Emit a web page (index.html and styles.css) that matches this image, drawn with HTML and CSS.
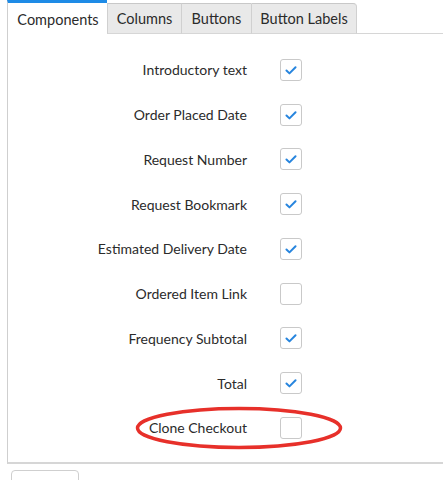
FILE: index.html
```html
<!DOCTYPE html>
<html>
<head>
<meta charset="utf-8">
<link rel="stylesheet" href="styles.css">
</head>
<body>
<div class="wrap">
  <div class="tabs">
    <div class="tab active">Components</div>
    <div class="tab">Columns</div>
    <div class="tab">Buttons</div>
    <div class="tab last">Button Labels</div>
    <div class="tab-fill"></div>
  </div>
  <div class="panel">
    <div class="row"><span class="label">Introductory text</span><span class="cb on"><svg viewBox="0 0 22 22"><path d="M6 11.5l3.3 3.2L16 8"/></svg></span></div>
    <div class="row"><span class="label">Order Placed Date</span><span class="cb on"><svg viewBox="0 0 22 22"><path d="M6 11.5l3.3 3.2L16 8"/></svg></span></div>
    <div class="row"><span class="label">Request Number</span><span class="cb on"><svg viewBox="0 0 22 22"><path d="M6 11.5l3.3 3.2L16 8"/></svg></span></div>
    <div class="row"><span class="label">Request Bookmark</span><span class="cb on"><svg viewBox="0 0 22 22"><path d="M6 11.5l3.3 3.2L16 8"/></svg></span></div>
    <div class="row"><span class="label">Estimated Delivery Date</span><span class="cb on"><svg viewBox="0 0 22 22"><path d="M6 11.5l3.3 3.2L16 8"/></svg></span></div>
    <div class="row"><span class="label">Ordered Item Link</span><span class="cb"></span></div>
    <div class="row"><span class="label">Frequency Subtotal</span><span class="cb on"><svg viewBox="0 0 22 22"><path d="M6 11.5l3.3 3.2L16 8"/></svg></span></div>
    <div class="row"><span class="label">Total</span><span class="cb on"><svg viewBox="0 0 22 22"><path d="M6 11.5l3.3 3.2L16 8"/></svg></span></div>
    <div class="row highlight"><span class="label">Clone Checkout</span><span class="cb"></span>
      <svg class="ring" viewBox="0 0 210 44"><ellipse cx="105" cy="22" rx="101.5" ry="19.5"/></svg>
    </div>
  </div>
  <div class="btn"></div>
</div>
</body>
</html>
```
FILE: styles.css
```css
html, body {
  margin: 0;
  padding: 0;
  background: #fff;
}
body {
  font-family: "Source Sans Pro", Lato, "Liberation Sans", sans-serif;
  color: #333;
  font-size: 14px;
  width: 443px;
  height: 480px;
  overflow: hidden;
}
.wrap {
  padding-left: 7px;
}
.tabs {
  display: flex;
  height: 34px;
}
.tab {
  box-sizing: border-box;
  height: 31px;
  margin-top: 3px;
  background: #e9e9e9;
  border-top: 1px solid #c8c8c8;
  border-left: 1px solid #d0d0d0;
  border-bottom: 1px solid #d6d6d6;
  display: flex;
  align-items: center;
  justify-content: center;
  font-size: 14.5px;
  color: #2b2b2b;
}
.tab.active {
  width: 100px;
  height: 34px;
  margin-top: 0;
  background: #fff;
  border-top: 3px solid #1e8be6;
  border-left: 1px solid #cfcfcf;
  border-bottom: none;
  padding-top: 2px;
  padding-left: 1px;
}
.tab:nth-child(2) { width: 74px; }
.tab:nth-child(3) { width: 70px; }
.tab.last {
  width: 106px;
  border-right: 1px solid #d0d0d0;
  border-top-right-radius: 4px;
}
.tab-fill {
  flex: 1;
  border-bottom: 1px solid #d6d6d6;
}
.panel {
  border-left: 1px solid #cfcfcf;
  border-bottom: 2px solid #d6d6d6;
  height: 430px;
  box-sizing: border-box;
  padding-top: 13.5px;
}
.row {
  display: grid;
  grid-template-columns: 239px 22px;
  column-gap: 33px;
  height: 44.75px;
  align-items: center;
  position: relative;
}
.label {
  text-align: right;
  font-size: 14px;
  color: #2b2b2b;
}
.cb {
  box-sizing: border-box;
  width: 22px;
  height: 22px;
  border: 1px solid #c9c9c9;
  border-radius: 3px;
  background: #fff;
  display: block;
}
.cb svg {
  display: block;
  width: 20px;
  height: 20px;
}
.cb svg path {
  fill: none;
  stroke: #2785de;
  stroke-width: 2.2;
  stroke-linecap: round;
  stroke-linejoin: round;
}
.ring {
  position: absolute;
  left: 126px;
  top: 0;
  width: 210px;
  height: 44px;
  overflow: visible;
}
.ring ellipse {
  fill: none;
  stroke: #e7302a;
  stroke-width: 3.5;
}
.btn {
  margin-top: 6px;
  margin-left: 4px;
  width: 66px;
  height: 20px;
  border: 1px solid #cfcfcf;
  border-radius: 4px;
}
```
